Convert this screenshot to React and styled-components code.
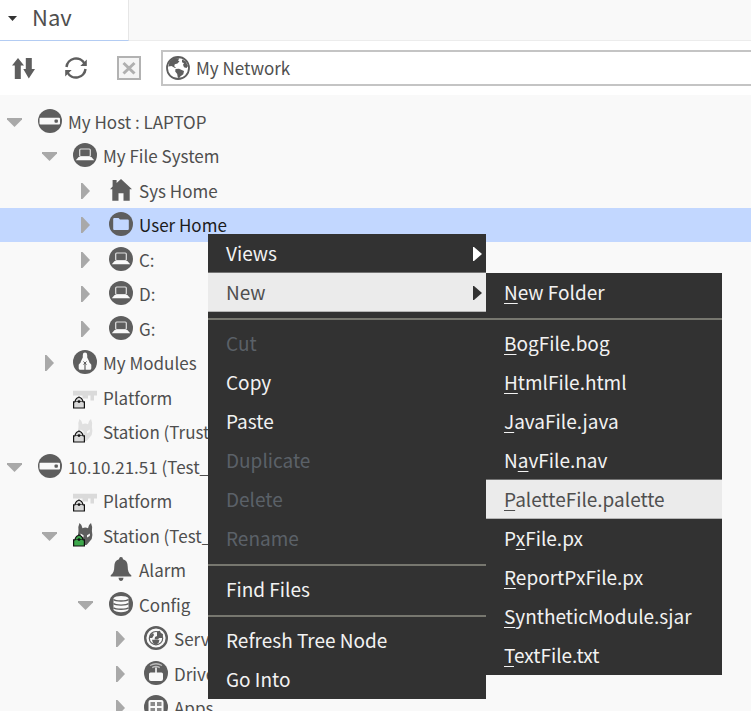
import React, { useState } from 'react';
import styled, { createGlobalStyle } from 'styled-components';

const INK = '#5e5e5e';
const INDENTS = [7, 42, 78, 113];

const GlobalStyle = createGlobalStyle`
  *, *::before, *::after {
    box-sizing: border-box;
  }

  body {
    margin: 0;
    background: #f9f9f9;
    color: #4f4f4f;
    font-family: "Noto Sans CJK SC", "Noto Sans", sans-serif;
    overflow: hidden;
  }

  button, input {
    font: inherit;
    color: inherit;
  }
`

const Panel = styled.div`
  position: relative;
  display: flex;
  flex-direction: column;
  height: 100vh;
  overflow: hidden;
`

const TabBar = styled.header`
  display: flex;
  flex: none;
  height: 41px;
  border-bottom: 1px solid #ececec;
`

const Tab = styled.button`
  display: flex;
  align-items: center;
  gap: 15px;
  width: 129px;
  height: 41px;
  padding: 0 0 8px 8px;
  border: 0;
  border-right: 1px solid #e6e6e6;
  border-bottom: 1px solid #b3ccf3;
  background: #fff;
  font-size: 22px;
  line-height: 32px;

  svg {
    margin-top: 4px;
  }
`

const Toolbar = styled.div`
  display: flex;
  flex: none;
  align-items: center;
  height: 54px;
  padding-left: 11px;
  background: #fff;
`

const ToolButton = styled.button`
  display: flex;
  width: 24px;
  height: 24px;
  margin-right: 29px;
  padding: 0;
  border: 0;
  background: none;
`

const PathField = styled.label`
  display: flex;
  flex: 1;
  align-items: center;
  gap: 6px;
  height: 36px;
  margin-left: -9px;
  padding-left: 3px;
  border: 2px solid #c4c4c4;
  border-right: 0;
  background: #fff;
`

const PathInput = styled.input`
  flex: 1;
  min-width: 0;
  padding: 0;
  border: 0;
  outline: 0;
  background: none;
  font-size: 17px;
  line-height: 28px;
`

const Tree = styled.ul`
  flex: 1;
  margin: 0;
  padding: 9px 0 0;
  list-style: none;
  overflow: hidden;
`

const TreeRow = styled.li`
  display: flex;
  align-items: center;
  height: 34px;
  padding-left: ${({ $level }) => INDENTS[$level]}px;
  background: ${({ $selected }) => ($selected ? '#c2d7ff' : 'transparent')};
  color: ${({ $selected }) => ($selected ? '#1c1c1c' : 'inherit')};
  font-size: 17px;
  line-height: 28px;
  white-space: nowrap;

  &:nth-child(odd) {
    height: 35px;
  }

  > svg {
    flex: none;
    margin: 0 6px 2px 0;
  }
`

const Toggle = styled.button`
  display: flex;
  flex: none;
  justify-content: center;
  width: 15px;
  margin-right: 16px;
  padding: 0;
  border: 0;
  background: none;
`

const ToggleSpace = styled.span`
  flex: none;
  width: 31px;
`

const Menu = styled.div`
  position: absolute;
  top: ${({ $top }) => $top}px;
  left: ${({ $left }) => $left}px;
  width: ${({ $width }) => $width}px;
  background: #323232;
  color: #f2f2f2;
`

const MenuItem = styled.button`
  display: flex;
  align-items: center;
  justify-content: space-between;
  width: 100%;
  height: 39px;
  padding: 0 4px 2px 18px;
  border: 0;
  background: ${({ $active }) => ($active ? '#ebebeb' : 'transparent')};
  box-shadow: ${({ $active }) => ($active ? 'inset 0 -1px #b4b4b4, 0 -1px #747474' : 'none')};
  color: ${({ $active }) => ($active ? '#4f4f4f' : 'inherit')};
  font-size: 19px;
  line-height: 28px;
  text-align: left;
  white-space: nowrap;

  &:disabled {
    color: #5b6168;
  }

  svg {
    margin-top: 2px;
  }
`

const Mnemonic = styled.span`
  text-decoration: underline;
  text-decoration-thickness: 1px;
  text-underline-offset: 3px;
  text-decoration-skip-ink: none;
`

const Separator = styled.hr`
  height: 2px;
  margin: 0;
  border: 0;
  border-top: 6px solid #323232;
  border-bottom: 4px solid #323232;
  box-sizing: content-box;
  background: #77776f;
`

function Icon({ children, size = 24 }) {
  return (
    <svg width={size} height={size} viewBox="0 0 24 24" fill="none" aria-hidden="true">
      {children}
    </svg>
  )
}

const Disc = () => <circle cx="12" cy="12" r="12" fill={INK} />

const HostIcon = () => (
  <Icon>
    <Disc />
    <rect x="1.5" y="8.8" width="20.5" height="6.7" rx="1" fill="#f9f9f9" />
    <rect x="16.5" y="10.6" width="3.4" height="3.2" rx="1" fill={INK} />
  </Icon>
)

const DriveIcon = () => (
  <Icon>
    <Disc />
    <rect x="6.700" y="6" width="10.600" height="7.500" rx="1" stroke="#e0e0e0" strokeWidth="1.200" />
    <path d="M5.600 14h12.800l2.800 3.200H2.800z" fill="#f9f9f9" />
  </Icon>
)

const HomeIcon = () => (
  <Icon>
    <path d="M12 1 23 11.2h-2.3v11.6h-6.2v-7.6h-5v7.6H3.3V11.2H1L3.6 8.5V2h4v3z" fill={INK} />
  </Icon>
)

const FolderIcon = () => (
  <Icon>
    <Disc />
    <path d="M4.200 7q0-1 1-1h4.400l1.400 1.500h7.800q1 0 1 1V17q0 1-1 1H5.200q-1 0-1-1z" fill="#c2d7ff" />
  </Icon>
)

const ModulesIcon = () => (
  <Icon>
    <Disc />
    <path d="M12 2.600q2.200 0 2.200 2.400v2.500l2 4v1.500H7.800v-1.500l2-4V5q0-2.400 2.200-2.400z" fill="#f9f9f9" />
    <path d="M7.500 12.500h3.900v7.300H7.200q-1.500 0-1.500-1.500v-3.600zM16.500 12.500h-3.900v7.300h4.200q1.500 0 1.500-1.500v-3.600z" fill="#f9f9f9" />
    <path d="m10.400 11.500 3.200 3M13.600 11.500l-3.200 3" stroke={INK} strokeWidth="1" />
  </Icon>
)

const Lock = ({ fill }) => (
  <>
    <path d="M2.300 16.800v-1.500Q3 13 6 12q3 1 3.700 3.300v1.500z" fill={fill} stroke="#111" strokeWidth="1.200" />
    <rect x=".6" y="16.800" width="10.800" height="6.200" fill={fill} />
    <path d="M2.300 16.800H.6V23h10.800v-6.200H9.700" stroke="#111" strokeWidth="1.200" />
    <circle cx="6" cy="16.600" r="1.400" fill="#111" />
  </>
)

const PlatformIcon = () => (
  <Icon>
    <path d="M0 5.800h24v4.700h-3v5h-3.500v-5H15v3H9.500v-3H0z" fill="#dadada" />
    <Lock fill="#d8d8d8" />
  </Icon>
)

const StationIcon = ({ online }) => (
  <Icon>
    <path
      d="M6.500 0q2.300 1.500 3 5.200 2.800-1.300 5.500 0Q15.500 1.500 18 0q1.700 3.500.9 8 1.100 4.200-.2 8L14.500 21l-1 1h-2.500l-1-1L5.700 16q-1.300-3.800-.2-8Q4.800 3.500 6.500 0z"
      fill={online ? INK : '#e0e0e0'}
    />
    <path d="m7.500 10.500 3 1.700v2.300L7.800 13zM17 10.500l-3 1.700v2.300l2.700-1.500z" fill="#f9f9f9" />
    <Lock fill={online ? '#3da84c' : '#d8d8d8'} />
  </Icon>
)

const BellIcon = () => (
  <Icon>
    <path d="M12 0q2 0 2 2.200c3.300.8 4.700 3.600 4.700 7.300 0 4.400 1 7 3.600 8.700v1.300H1.700v-1.300c2.600-1.700 3.600-4.300 3.600-8.700C5.300 5.800 6.700 3 10 2.200 10 0 12 0 12 0zM9.500 20.800h5Q14 24 12 24t-2.500-3.200z" fill={INK} />
  </Icon>
)

const ConfigIcon = () => (
  <Icon>
    <Disc />
    <path d="M4.500 6.200C6 3.300 18 3.300 19.500 6.200v11.600C18 21 6 21 4.500 17.800z" fill="#f9f9f9" />
    <path d="M4.500 7.500c2 2 13 2 15 0M4.500 11.600c2 2 13 2 15 0M4.500 15.700c2 2 13 2 15 0" stroke={INK} strokeWidth="1.400" />
  </Icon>
)

const ServicesIcon = () => (
  <Icon>
    <circle cx="12" cy="12" r="10.800" stroke={INK} strokeWidth="2.400" />
    <circle cx="12" cy="12.200" r="6.700" stroke={INK} strokeWidth="1.200" />
    <path d="m13 5.500 3-.8.7 2.600 2.300.7-.6 4h-3.200l-1.600 1.500h-3l.4-2.500 2-1z" fill={INK} />
    <path d="m6 9.500 3-2.500 1 2-1.800 3H6zM8 13.800h7.500l-1 3.200-2.500 1.800-3-1.500z" fill={INK} />
  </Icon>
)

const DriversIcon = () => (
  <Icon>
    <Disc />
    <path d="M6 4.500q6-3.500 12 0M8.200 6.600q3.800-2.200 7.600 0" stroke="#bcbcbc" strokeWidth="1.300" />
    <path d="M11.200 6.500h1.600v5h4.700q1.500 0 1.500 1.500v5q0 2-2 2H7q-2 0-2-2v-5q0-1.500 1.500-1.500h4.700z" fill="#f9f9f9" />
  </Icon>
)

const AppsIcon = () => (
  <Icon>
    <Disc />
    <rect x="4.500" y="5" width="15" height="14" rx="2" fill="#f9f9f9" />
    <path d="M6.500 7H11v4H6.500zM13 7h4.500v4H13zM6.500 13H11v4H6.500zM13 13h4.500v4H13z" fill="#8a8a8a" />
  </Icon>
)

const GlobeIcon = () => (
  <Icon>
    <circle cx="12" cy="12" r="11" stroke={INK} strokeWidth="1.800" />
    <path d="M3.500 5.500 8 2l5.500.2L12 4.500l1.500.8-2 2.200-2.700.8-.6 2 1.800 1.500L9 12l-3.500-2-3 .5z" fill={INK} />
    <path d="m9.500 13 3.500-.3 5 2.300-.7 3.200-3 2.300-1 1.500-1.500-.3-.6-3.700-2-2.500zM16 3.500l3.500 1.500 2.500 5-1.500 2-2.500-.8-1-2.500 1-1.500-2-1z" fill={INK} />
  </Icon>
)

const SortIcon = () => (
  <Icon>
    <path d="M7 2l6 7.500H9.800V23H3.800V9.500H1zM14.800 2h6v11H24l-6.200 9.500-5.500-9.500h2.500z" fill={INK} />
  </Icon>
)

const RefreshIcon = () => (
  <Icon>
    <path d="M2.500 11A9.600 9.600 0 0 1 20.500 7.500M21.500 13A9.600 9.600 0 0 1 3.500 16.500" stroke={INK} strokeWidth="2.500" />
    <path d="M22.800 3.500v6.500h-6.500zM1.200 20.500V14h6.500z" fill={INK} />
  </Icon>
)

const CloseIcon = () => (
  <Icon>
    <rect x="1" y="1" width="22" height="22" fill="#f5f5f5" stroke="#b2b2b2" strokeWidth="2" />
    <path d="m6.500 7 11 10.500M17.500 7l-11 10.500" stroke="#b0b0b0" strokeWidth="3" />
  </Icon>
)

function Chevron({ open }) {
  return open ? (
    <svg width="15" height="10" viewBox="0 0 15 10" fill="#a9a9a9"><path d="M0 1h15v1.500L7.500 10 0 2.500z" /></svg>
  ) : (
    <svg width="9" height="16" viewBox="0 0 9 16" fill="#a9a9a9"><path d="M0 0h1.500L9 8l-7.500 8H0z" /></svg>
  )
}

const nodes = [
  { level: 0, label: 'My Host : LAPTOP', icon: <HostIcon />, open: true },
  { level: 1, label: 'My File System', icon: <DriveIcon />, open: true },
  { level: 2, label: 'Sys Home', icon: <HomeIcon />, open: false },
  { level: 2, label: 'User Home', icon: <FolderIcon />, open: false },
  { level: 2, label: 'C:', icon: <DriveIcon />, open: false },
  { level: 2, label: 'D:', icon: <DriveIcon />, open: false },
  { level: 2, label: 'G:', icon: <DriveIcon />, open: false },
  { level: 1, label: 'My Modules', icon: <ModulesIcon />, open: false },
  { level: 1, label: 'Platform', icon: <PlatformIcon /> },
  { level: 1, label: 'Station (Trust_', icon: <StationIcon /> },
  { level: 0, label: '10.10.21.51 (Test_I', icon: <HostIcon />, open: true },
  { level: 1, label: 'Platform', icon: <PlatformIcon /> },
  { level: 1, label: 'Station (Test_', icon: <StationIcon online />, open: true },
  { level: 2, label: 'Alarm', icon: <BellIcon /> },
  { level: 2, label: 'Config', icon: <ConfigIcon />, open: true },
  { level: 3, label: 'Services', icon: <ServicesIcon />, open: false },
  { level: 3, label: 'Drivers', icon: <DriversIcon />, open: false },
  { level: 3, label: 'Apps', icon: <AppsIcon />, open: false },
];

// null is a separator
const contextItems = [
  { label: 'Views', submenu: true },
  { label: 'New', submenu: true, active: true },
  null,
  { label: 'Cut', disabled: true },
  { label: 'Copy' },
  { label: 'Paste' },
  { label: 'Duplicate', disabled: true },
  { label: 'Delete', disabled: true },
  { label: 'Rename', disabled: true },
  null,
  { label: 'Find Files' },
  null,
  { label: 'Refresh Tree Node' },
  { label: 'Go Into' },
];

const newItems = [
  { label: 'New Folder', key: 0 },
  null,
  { label: 'BogFile.bog', key: 0 },
  { label: 'HtmlFile.html', key: 0 },
  { label: 'JavaFile.java', key: 0 },
  { label: 'NavFile.nav', key: 1 },
  { label: 'PaletteFile.palette', key: 0, active: true },
  { label: 'PxFile.px', key: 1 },
  { label: 'ReportPxFile.px', key: 0 },
  { label: 'SyntheticModule.sjar', key: 0 },
  { label: 'TextFile.txt', key: 0 },
];

function MenuLabel({ label, mnemonic }) {
  if (mnemonic === undefined) return <span>{label}</span>;
  return (
    <span>
      {label.slice(0, mnemonic)}
      <Mnemonic>{label[mnemonic]}</Mnemonic>
      {label.slice(mnemonic + 1)}
    </span>
  )
}

function PopupMenu({ items, label, ...place }) {
  return (
    <Menu role="menu" aria-label={label} {...place}>
      {items.map((item, i) => item === null ? <Separator key={i} /> : (
        <MenuItem key={i} role="menuitem" type="button" disabled={item.disabled} $active={item.active}>
          <MenuLabel label={item.label} mnemonic={item.key} />
          {item.submenu && (
            <svg width="9" height="14" viewBox="0 0 9 14" fill={item.active ? '#323232' : '#fff'}>
              <path d="M0 0h1l8 7-8 7H0z" />
            </svg>
          )}
        </MenuItem>
      ))}
    </Menu>
  )
}

function App() {
  const [path, setPath] = useState('My Network');
  const [selected, setSelected] = useState(3);

  return (
    <Panel>
      <GlobalStyle />
      <TabBar>
        <Tab type="button">
          <svg width="9" height="5" viewBox="0 0 9 5" fill="#333"><path d="M0 0h9L4.500 5z" /></svg>
          Nav
        </Tab>
      </TabBar>
      <Toolbar>
        <ToolButton type="button" aria-label="Sort"><SortIcon /></ToolButton>
        <ToolButton type="button" aria-label="Refresh"><RefreshIcon /></ToolButton>
        <ToolButton type="button" aria-label="Close"><CloseIcon /></ToolButton>
        <PathField>
          <GlobeIcon />
          <PathInput aria-label="Location" value={path} onChange={e => setPath(e.target.value)} />
        </PathField>
      </Toolbar>
      <Tree role="tree">
        {nodes.map((node, i) => (
          <TreeRow
            key={i}
            role="treeitem"
            aria-selected={i === selected}
            $level={node.level}
            $selected={i === selected}
            onClick={() => setSelected(i)}
          >
            {node.open === undefined ? <ToggleSpace /> : (
              <Toggle type="button" aria-label={`Toggle ${node.label}`}>
                <Chevron open={node.open} />
              </Toggle>
            )}
            {node.icon}
            <span>{node.label}</span>
          </TreeRow>
        ))}
      </Tree>
      <PopupMenu items={contextItems} label="User Home" $top={234} $left={208} $width={278} />
      <PopupMenu items={newItems} label="New" $top={273} $left={486} $width={236} />
    </Panel>
  )
}

export default App;
